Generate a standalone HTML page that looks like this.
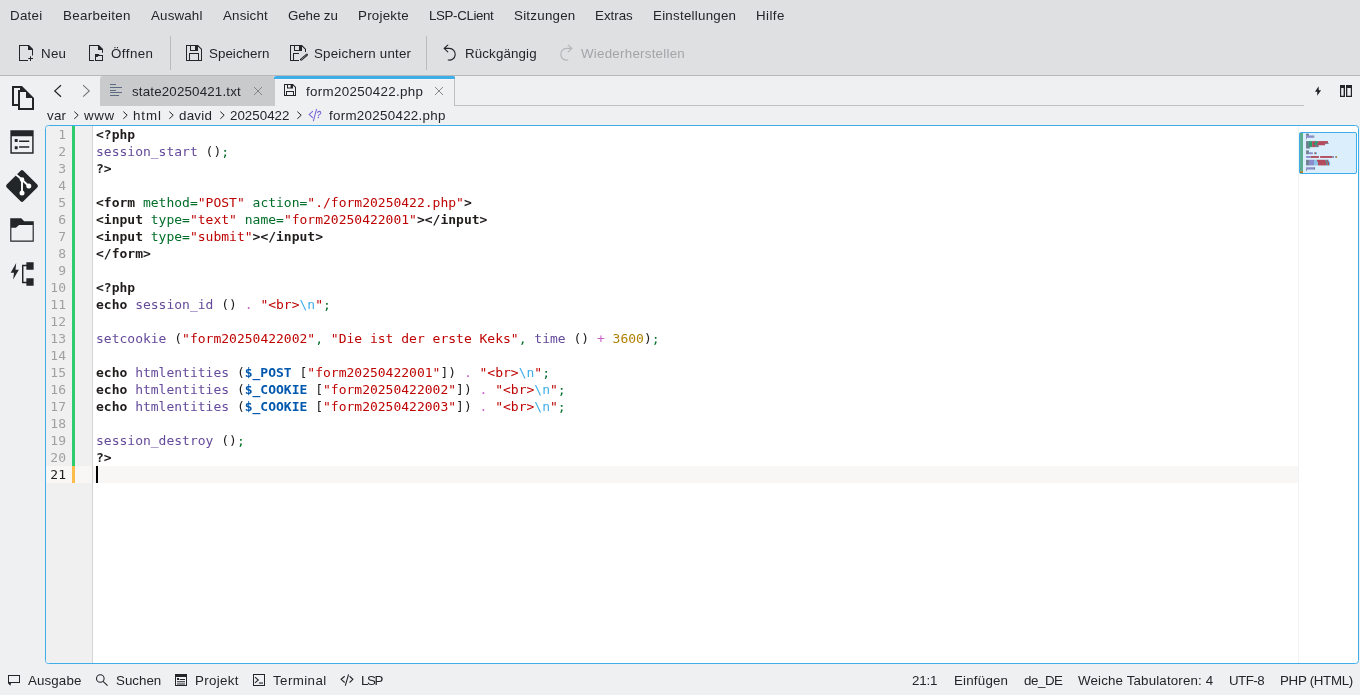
<!DOCTYPE html>
<html lang="de">
<head>
<meta charset="utf-8">
<title>form20250422.php — Kate</title>
<style>
html,body{margin:0;padding:0;}
.mi,.tb,.tt,.bc,.st,.cl,.ln{will-change:transform;}
body{width:1360px;height:695px;overflow:hidden;background:#eff0f1;position:relative;
  font-family:"Liberation Sans","DejaVu Sans",sans-serif;font-size:13.33px;color:#232629;letter-spacing:0.25px;}
.abs{position:absolute;}
#header{position:absolute;left:0;top:0;width:1360px;height:75px;background:#dee0e2;}
#hline{position:absolute;left:0;top:75px;width:1360px;height:1px;background:#b6b8ba;}
.mi{position:absolute;top:8px;height:16px;line-height:16px;white-space:nowrap;}
.tb{position:absolute;top:46px;height:16px;line-height:16px;white-space:nowrap;}
.tb.dis{color:#a3a5a7;}
.vsep{position:absolute;top:36px;width:1px;height:34px;background:#b9bbbd;}
svg{position:absolute;overflow:visible;}
#tab1{position:absolute;left:100px;top:76px;width:175px;height:30px;background:#c9cacb;border-radius:3px 3px 0 0;}
#tab2{position:absolute;left:275px;top:76px;width:180px;height:30px;background:#eff0f1;border-right:1px solid #bfc1c3;box-sizing:border-box;}
#tab2top{position:absolute;left:274px;top:76px;width:181px;height:3px;background:#3daee9;border-radius:2px 2px 0 0;}
#tab2hl{position:absolute;left:275px;top:79px;width:179px;height:1px;background:#f8f6f5;}
#tabline{position:absolute;left:455px;top:105px;width:849px;height:1px;background:#bfc1c3;}
.tt{position:absolute;top:84px;height:16px;line-height:16px;white-space:nowrap;}
.bc{position:absolute;top:108px;height:16px;line-height:16px;white-space:nowrap;}
#editor{position:absolute;left:45px;top:125px;width:1314px;height:539px;box-sizing:border-box;border:1px solid #3daee9;border-radius:3.5px;background:#fff;overflow:hidden;}
#gutter{position:absolute;left:0;top:0;width:46px;height:537px;background:#f0f0f0;}
#gsep{position:absolute;left:46px;top:0;width:1px;height:537px;background:#d4d4d4;}
#saved{position:absolute;left:26px;top:0;width:3px;height:340px;background:#2ecc71;}
#modif{position:absolute;left:26px;top:340px;width:3px;height:17px;background:#fdbc4b;}
#curline{position:absolute;left:0;top:340px;width:1252px;height:17px;background:#f8f7f6;}
#caret{position:absolute;left:50px;top:340px;width:2px;height:16.6px;background:#000;}
.ln{position:absolute;left:0;width:20px;text-align:right;height:17px;line-height:17px;color:#a0a0a0;
  font-family:"DejaVu Sans Mono","Liberation Mono",monospace;font-size:13px;letter-spacing:0;}
.ln.cur{color:#1e1e1e;}
.cl{position:absolute;left:50px;height:17px;line-height:17px;white-space:pre;color:#1f1c1b;
  font-family:"DejaVu Sans Mono","Liberation Mono",monospace;font-size:13px;letter-spacing:0;}
.cl b{font-weight:bold;}
.f{color:#644a9b;} .s{color:#bf0303;} .o{color:#ca60ca;} .g{color:#006e28;} .v{color:#0057ae;font-weight:bold;}
.e{color:#3daee9;} .n{color:#b08000;}
#mmsep{position:absolute;left:1252px;top:0;width:1px;height:537px;background:#f3f3f3;}
#mmbox{position:absolute;left:1253px;top:6px;width:58px;height:42px;box-sizing:border-box;border:1px solid #3daee9;border-radius:2px;background:#daeefb;}
.st{position:absolute;top:673px;height:16px;line-height:16px;white-space:nowrap;}
</style>
</head>
<body>
<div id="header"></div>
<div id="hline"></div>

<!-- menu bar -->
<div class="mi" style="left:10px">Datei</div>
<div class="mi" style="left:63px;letter-spacing:0.34px">Bearbeiten</div>
<div class="mi" style="left:151px;letter-spacing:0.17px">Auswahl</div>
<div class="mi" style="left:223px;letter-spacing:0.17px">Ansicht</div>
<div class="mi" style="left:288px;letter-spacing:-0.09px">Gehe zu</div>
<div class="mi" style="left:358px">Projekte</div>
<div class="mi" style="left:429px;letter-spacing:-0.37px">LSP-CLient</div>
<div class="mi" style="left:514px">Sitzungen</div>
<div class="mi" style="left:595px;letter-spacing:0px">Extras</div>
<div class="mi" style="left:653px">Einstellungen</div>
<div class="mi" style="left:756px;letter-spacing:0.43px">Hilfe</div>

<!-- toolbar -->
<div class="tb" style="left:41px">Neu</div>
<div class="tb" style="left:111px;letter-spacing:0.45px">Öffnen</div>
<div class="vsep" style="left:170px"></div>
<div class="tb" style="left:209px;letter-spacing:0.05px">Speichern</div>
<div class="tb" style="left:314px;letter-spacing:0.21px">Speichern unter</div>
<div class="vsep" style="left:426px"></div>
<div class="tb" style="left:465px;letter-spacing:0.13px">Rückgängig</div>
<div class="tb dis" style="left:581px">Wiederherstellen</div>

<!-- tabs -->
<div id="tab1"></div>
<div id="tab2"></div>
<div id="tab2top"></div>
<div id="tab2hl"></div>
<div id="tabline"></div>
<div class="tt" style="left:132px;letter-spacing:0.17px">state20250421.txt</div>
<div class="tt" style="left:306px;letter-spacing:0.33px">form20250422.php</div>

<!-- breadcrumb -->
<div class="bc" style="left:47px">var</div>
<div class="bc" style="left:84px;letter-spacing:0.62px">www</div>
<div class="bc" style="left:133px;letter-spacing:0.91px">html</div>
<div class="bc" style="left:179px">david</div>
<div class="bc" style="left:230px;letter-spacing:0.02px">20250422</div>
<div class="bc" style="left:329px;letter-spacing:0.3px">form20250422.php</div>

<!-- editor -->
<div id="editor">
  <div id="gutter"></div>
  <div id="curline"></div>
  <div id="gsep"></div>
  <div id="saved"></div>
  <div id="modif"></div>
  <div class="ln" style="top:0px">1</div>
  <div class="cl" style="top:0px"><b>&lt;?php</b></div>
  <div class="ln" style="top:17px">2</div>
  <div class="cl" style="top:17px"><span class="f">session_start</span> ()<span class="g">;</span></div>
  <div class="ln" style="top:34px">3</div>
  <div class="cl" style="top:34px"><b>?&gt;</b></div>
  <div class="ln" style="top:51px">4</div>
  <div class="ln" style="top:68px">5</div>
  <div class="cl" style="top:68px"><b>&lt;form</b> <span class="g">method=</span><span class="s">"POST"</span> <span class="g">action=</span><span class="s">"./form20250422.php"</span><b>&gt;</b></div>
  <div class="ln" style="top:85px">6</div>
  <div class="cl" style="top:85px"><b>&lt;input</b> <span class="g">type=</span><span class="s">"text"</span> <span class="g">name=</span><span class="s">"form20250422001"</span><b>&gt;&lt;/input&gt;</b></div>
  <div class="ln" style="top:102px">7</div>
  <div class="cl" style="top:102px"><b>&lt;input</b> <span class="g">type=</span><span class="s">"submit"</span><b>&gt;&lt;/input&gt;</b></div>
  <div class="ln" style="top:119px">8</div>
  <div class="cl" style="top:119px"><b>&lt;/form&gt;</b></div>
  <div class="ln" style="top:136px">9</div>
  <div class="ln" style="top:153px">10</div>
  <div class="cl" style="top:153px"><b>&lt;?php</b></div>
  <div class="ln" style="top:170px">11</div>
  <div class="cl" style="top:170px"><b>echo</b> <span class="f">session_id</span> () <span class="o">.</span> <span class="s">"&lt;br&gt;</span><span class="e">\n</span><span class="s">"</span><span class="g">;</span></div>
  <div class="ln" style="top:187px">12</div>
  <div class="ln" style="top:204px">13</div>
  <div class="cl" style="top:204px"><span class="f">setcookie</span> (<span class="s">"form20250422002"</span><span class="g">,</span> <span class="s">"Die ist der erste Keks"</span><span class="g">,</span> <span class="f">time</span> () <span class="o">+</span> <span class="n">3600</span>)<span class="g">;</span></div>
  <div class="ln" style="top:221px">14</div>
  <div class="ln" style="top:238px">15</div>
  <div class="cl" style="top:238px"><b>echo</b> <span class="f">htmlentities</span> (<span class="v">$_POST</span> [<span class="s">"form20250422001"</span>]) <span class="o">.</span> <span class="s">"&lt;br&gt;</span><span class="e">\n</span><span class="s">"</span><span class="g">;</span></div>
  <div class="ln" style="top:255px">16</div>
  <div class="cl" style="top:255px"><b>echo</b> <span class="f">htmlentities</span> (<span class="v">$_COOKIE</span> [<span class="s">"form20250422002"</span>]) <span class="o">.</span> <span class="s">"&lt;br&gt;</span><span class="e">\n</span><span class="s">"</span><span class="g">;</span></div>
  <div class="ln" style="top:272px">17</div>
  <div class="cl" style="top:272px"><b>echo</b> <span class="f">htmlentities</span> (<span class="v">$_COOKIE</span> [<span class="s">"form20250422003"</span>]) <span class="o">.</span> <span class="s">"&lt;br&gt;</span><span class="e">\n</span><span class="s">"</span><span class="g">;</span></div>
  <div class="ln" style="top:289px">18</div>
  <div class="ln" style="top:306px">19</div>
  <div class="cl" style="top:306px"><span class="f">session_destroy</span> ()<span class="g">;</span></div>
  <div class="ln" style="top:323px">20</div>
  <div class="cl" style="top:323px"><b>?&gt;</b></div>
  <div class="ln cur" style="top:340px">21</div>
  <div id="mmsep"></div>
  <div id="mmbox"></div>
  <svg id="mm" style="left:1253px;top:6px" width="58" height="42" viewBox="0 0 58 42"><rect x="1" y="1" width="3" height="38.2" fill="#5dab90"/><rect x="1" y="39.2" width="3" height="1.8" fill="#b07a1e"/><rect x="7.11" y="1.60" width="2.80" height="2.30" fill="#6e7d8c"/><rect x="7.11" y="3.47" width="7.25" height="2.30" fill="#8b8ccb"/><rect x="14.36" y="3.47" width="0.88" height="2.30" fill="#6e7d8c"/><rect x="7.11" y="5.34" width="0.73" height="1.87" fill="#6e7d8c"/><rect x="7.11" y="9.08" width="2.80" height="2.30" fill="#6e7d8c"/><rect x="9.91" y="9.08" width="3.26" height="2.30" fill="#2e9c6f"/><rect x="13.17" y="9.08" width="2.85" height="2.30" fill="#b34b5c"/><rect x="16.02" y="9.08" width="3.11" height="2.30" fill="#2e9c6f"/><rect x="19.13" y="9.08" width="9.84" height="2.30" fill="#b34b5c"/><rect x="7.11" y="10.95" width="2.80" height="2.30" fill="#6e7d8c"/><rect x="9.91" y="10.95" width="3.26" height="2.30" fill="#2e9c6f"/><rect x="13.17" y="10.95" width="1.81" height="2.30" fill="#b34b5c"/><rect x="14.98" y="10.95" width="3.11" height="2.30" fill="#2e9c6f"/><rect x="18.09" y="10.95" width="8.03" height="2.30" fill="#b34b5c"/><rect x="26.12" y="10.95" width="3.63" height="0.90" fill="#6e7d8c"/><rect x="7.11" y="12.82" width="2.80" height="2.30" fill="#6e7d8c"/><rect x="9.91" y="12.82" width="3.26" height="2.30" fill="#2e9c6f"/><rect x="13.17" y="12.82" width="2.85" height="2.30" fill="#b34b5c"/><rect x="16.02" y="12.82" width="3.73" height="2.30" fill="#6e7d8c"/><rect x="7.11" y="14.69" width="3.73" height="1.87" fill="#6e7d8c"/><rect x="7.11" y="18.43" width="2.80" height="2.30" fill="#6e7d8c"/><rect x="7.11" y="20.30" width="2.80" height="1.87" fill="#6e7d8c"/><rect x="9.91" y="20.30" width="3.94" height="1.87" fill="#8b8ccb"/><rect x="15.24" y="20.30" width="0.78" height="1.87" fill="#6e7d8c"/><rect x="16.02" y="20.30" width="1.04" height="1.87" fill="#b34b5c"/><rect x="17.05" y="20.30" width="0.93" height="1.87" fill="#5bc0ee"/><rect x="7.11" y="24.04" width="4.87" height="1.87" fill="#8b8ccb"/><rect x="11.98" y="24.04" width="7.92" height="1.87" fill="#b34b5c"/><rect x="21.09" y="24.04" width="12.01" height="1.87" fill="#b34b5c"/><rect x="33.11" y="24.04" width="1.81" height="1.87" fill="#8186b5"/><rect x="36.21" y="24.04" width="0.67" height="1.87" fill="#6e7d8c"/><rect x="36.89" y="24.04" width="1.14" height="1.87" fill="#a98a35"/><rect x="7.11" y="27.78" width="2.80" height="2.30" fill="#6e7d8c"/><rect x="9.91" y="27.78" width="5.08" height="2.30" fill="#8b8ccb"/><rect x="14.98" y="27.78" width="3.00" height="2.30" fill="#8cc3e8"/><rect x="17.99" y="27.78" width="8.13" height="2.30" fill="#b34b5c"/><rect x="26.12" y="27.78" width="1.81" height="2.30" fill="#6e7d8c"/><rect x="27.93" y="27.78" width="1.04" height="2.30" fill="#b34b5c"/><rect x="28.96" y="27.78" width="0.93" height="2.30" fill="#5bc0ee"/><rect x="7.11" y="29.65" width="2.80" height="2.30" fill="#6e7d8c"/><rect x="9.91" y="29.65" width="5.08" height="2.30" fill="#8b8ccb"/><rect x="14.98" y="29.65" width="4.04" height="2.30" fill="#8cc3e8"/><rect x="19.02" y="29.65" width="8.03" height="2.30" fill="#b34b5c"/><rect x="27.05" y="29.65" width="1.92" height="2.30" fill="#6e7d8c"/><rect x="28.96" y="29.65" width="1.04" height="2.30" fill="#b34b5c"/><rect x="30.00" y="29.65" width="1.04" height="2.30" fill="#5bc0ee"/><rect x="7.11" y="31.52" width="2.80" height="1.87" fill="#6e7d8c"/><rect x="9.91" y="31.52" width="5.08" height="1.87" fill="#8b8ccb"/><rect x="14.98" y="31.52" width="4.04" height="1.87" fill="#8cc3e8"/><rect x="19.02" y="31.52" width="8.03" height="1.87" fill="#b34b5c"/><rect x="27.05" y="31.52" width="1.92" height="1.87" fill="#6e7d8c"/><rect x="28.96" y="31.52" width="1.04" height="1.87" fill="#b34b5c"/><rect x="30.00" y="31.52" width="1.04" height="1.87" fill="#5bc0ee"/><rect x="7.11" y="35.26" width="7.87" height="2.30" fill="#8b8ccb"/><rect x="14.98" y="35.26" width="1.04" height="2.30" fill="#6e7d8c"/><rect x="7.11" y="37.13" width="0.73" height="1.87" fill="#6e7d8c"/></svg>
  <div id="caret"></div>
</div>

<!-- icons -->
<svg style="left:15px;top:42px" width="22" height="22" viewBox="0 0 22 22"><path fill="#232629" d="M4 3H14L18 7V13.6H17V8H13V4H5V18H13V19H4Z"/><path fill="#232629" d="M13.2 3.4L17.8 8H13.2Z"/><path fill="#232629" d="M15 14.2H16V16H18V17H16V19H15V17H13.2V16H15Z"/></svg>
<svg style="left:85px;top:42px" width="22" height="22" viewBox="0 0 22 22"><path fill="#232629" d="M4 3H14L18 7V10.8H17V8H13V4H5V18H9V19H4Z"/><path fill="#232629" d="M13.2 3.4L17.8 8H13.2Z"/><path fill="#232629" fill-rule="evenodd" d="M10 12.1H13.6L14.7 13.1H18V19H10Z M11 14.9H12.4L13.4 14H17V17.9H11Z"/></svg>
<svg style="left:183px;top:42px" width="22" height="22" viewBox="0 0 22 22"><path fill="#232629" fill-rule="evenodd" d="M3 3H15L19 7V19H3Z M4 4V18H6V11H16V18H18V7.4L15 4.4V9H7V4Z M8 4V8H12V4Z M7 12V18H15V12Z"/></svg>
<svg style="left:287px;top:42px" width="22" height="22" viewBox="0 0 22 22"><path fill="#232629" fill-rule="evenodd" d="M3 3H15L19 7V10H18V7.4L15 4.4V9H7V4H4V18H6V11H12V12H7V18H12V19H3Z M8 4V8H12V4Z"/><path d="M14.1 17.6L19.8 12.8" stroke="#232629" stroke-width="2.3" stroke-linecap="round"/><path d="M14.2 17.5L19.7 12.9" stroke="#dee0e2" stroke-width="0.8" stroke-dasharray="0.9 0.55"/></svg>
<svg style="left:439px;top:42px" width="22" height="22" viewBox="0 0 22 22"><path fill="none" stroke="#232629" stroke-width="1.15" stroke-linecap="round" stroke-linejoin="round" d="M8.8 3.1L5.1 6.4L8.8 9.8M5.3 6.4H10.4A5.85 5.85 0 1 1 9.204 17.976"/></svg>
<svg style="left:555px;top:42px" width="22" height="22" viewBox="0 0 22 22"><path fill="none" stroke="#b3b5b7" stroke-width="1.15" stroke-linecap="round" stroke-linejoin="round" d="M13.2 3.1L16.9 6.4L13.2 9.8M16.7 6.4H11.6A5.85 5.85 0 1 0 12.796 17.976"/></svg>
<svg style="left:6px;top:82px" width="32" height="32" viewBox="0 0 16 16"><path fill="#232629" fill-rule="evenodd" d="M3 2H8L10 4V5H7V12H3Z M4 3V11H6V4H7V3Z"/><path fill="#232629" fill-rule="evenodd" d="M6 4H10L14 8V14H6Z M7 5V13H13V8H10V5Z"/></svg>
<svg style="left:6px;top:126px" width="32" height="32" viewBox="0 0 22 22"><path fill="#232629" fill-rule="evenodd" d="M3 3H19V19H3Z M4 7V18H18V7Z"/><path fill="#232629" d="M6 9H8V11H6Z M9 10H16V11H9Z M6 14H8V16H6Z M9 14H16V15H9Z"/></svg>
<svg style="left:0px;top:163.85px" width="44" height="44" viewBox="0 0 44 44"><rect x="10.2" y="10.2" width="23.6" height="23.6" rx="2" fill="#232629" transform="rotate(45 22 22)"/><path d="M16.2 10.8L22 15.6V28.8M22.6 16.2L28.6 22" stroke="#fff" stroke-width="1.9" fill="none"/><circle cx="22" cy="15.6" r="2.3" fill="#fff"/><circle cx="22" cy="28.9" r="2.5" fill="#fff"/><circle cx="28.8" cy="22.1" r="2.5" fill="#fff"/></svg>
<svg style="left:6px;top:214px" width="32" height="32" viewBox="0 0 22 22"><path fill="#232629" fill-rule="evenodd" d="M2.9 2.9H10.5L12.5 4.9H19.1V19.1H2.9Z M3.7 9.4H6.8L9 7.5H18.3V18.2H3.7Z"/></svg>
<svg style="left:6px;top:258px" width="32" height="32" viewBox="0 0 22 22"><path fill="#232629" d="M14 3H19V8H14Z M14 14H19V19H14Z M11 4.7H14V5.7H12V16.3H14V17.3H11Z"/><path fill="#232629" d="M7 3.5L3.2 10.1H5.5L4.9 14.7L8.85 8H6.55Z"/></svg>
<svg style="left:50px;top:82px" width="16" height="18" viewBox="0 0 16 18"><path d="M11 3.2L4.8 8.9L11 14.7" fill="none" stroke="#232629" stroke-width="1.25"/></svg>
<svg style="left:78px;top:82px" width="16" height="18" viewBox="0 0 16 18"><path d="M5.1 3.2L11.3 8.9L5.1 14.7" fill="none" stroke="#737577" stroke-width="1.1"/></svg>
<svg style="left:108px;top:82px" width="16" height="16" viewBox="0 0 16 16"><path fill="#5c6b82" d="M2 2H8V3H2Z M2 5H14V6H2Z M2 8H8V9H2Z M2 10H14V11H2Z M2 13H11V14H2Z"/></svg>
<svg style="left:250px;top:83px" width="16" height="16" viewBox="0 0 16 16"><path d="M4 4L12 12M12 4L4 12" stroke="#797b7d" stroke-width="0.9" fill="none"/></svg>
<svg style="left:431px;top:83px" width="16" height="16" viewBox="0 0 16 16"><path d="M4 4L12 12M12 4L4 12" stroke="#797b7d" stroke-width="0.9" fill="none"/></svg>
<svg style="left:282px;top:82px" width="16" height="16" viewBox="0 0 16 16"><path fill="#232629" fill-rule="evenodd" d="M2 2H11L14 5V14H2Z M3 3V13H4V9H12V13H13V5.4L11 3.4V6.4H5V3Z M6 3V5.4H8.6V3Z M5 10V13H11V10Z"/></svg>
<svg style="left:74px;top:109px" width="6" height="12" viewBox="0 0 6 12"><path d="M0.3 2.6L4.2 6.2L0.3 9.8" fill="none" stroke="#232629" stroke-width="1"/></svg>
<svg style="left:123px;top:109px" width="6" height="12" viewBox="0 0 6 12"><path d="M0.3 2.6L4.2 6.2L0.3 9.8" fill="none" stroke="#232629" stroke-width="1"/></svg>
<svg style="left:169px;top:109px" width="6" height="12" viewBox="0 0 6 12"><path d="M0.3 2.6L4.2 6.2L0.3 9.8" fill="none" stroke="#232629" stroke-width="1"/></svg>
<svg style="left:220px;top:109px" width="6" height="12" viewBox="0 0 6 12"><path d="M0.3 2.6L4.2 6.2L0.3 9.8" fill="none" stroke="#232629" stroke-width="1"/></svg>
<svg style="left:297px;top:109px" width="6" height="12" viewBox="0 0 6 12"><path d="M0.3 2.6L4.2 6.2L0.3 9.8" fill="none" stroke="#232629" stroke-width="1"/></svg>
<svg style="left:304px;top:104px" width="24" height="24" viewBox="0 0 24 24"><g fill="none" stroke="#7468dc" stroke-width="1.05" stroke-linecap="round"><path d="M8.6 7.3L5.2 10.4L8.6 13.6"/><path d="M12.5 5.3L9.4 16.8"/><path d="M13.6 8.6C13.8 6.9 16.8 6.9 16.8 8.9C16.8 10.4 14.7 10.4 14.5 11.8"/></g><circle cx="14.4" cy="13.5" r="0.75" fill="#7468dc"/></svg>
<svg style="left:1310px;top:83px" width="16" height="16" viewBox="0 0 16 16"><path fill="#232629" d="M8.6 3.2L5 8.8H7.2V12.8L11.1 7.2H8.8Z"/></svg>
<svg style="left:1338px;top:83px" width="16" height="16" viewBox="0 0 16 16"><path fill="#232629" fill-rule="evenodd" d="M2 2H7V14H2Z M3.2 5V12.8H5.6V5Z M8 2H14V14H8Z M9.3 5V12.8H12.8V5Z"/></svg>
<svg style="left:6px;top:672px" width="16" height="16" viewBox="0 0 16 16"><path fill="#232629" fill-rule="evenodd" d="M2 3H14V11H5L4.4 13.8L2.2 11.6L2 11Z M3 4V10H13V4Z"/></svg>
<svg style="left:94px;top:672px" width="16" height="16" viewBox="0 0 16 16"><circle cx="6.3" cy="6.5" r="3.8" fill="none" stroke="#232629" stroke-width="1.1"/><path d="M9 9.3L13.6 13.6" stroke="#232629" stroke-width="1.1"/></svg>
<svg style="left:173px;top:672px" width="16" height="16" viewBox="0 0 16 16"><path fill="#232629" fill-rule="evenodd" d="M2 2H14V14H2Z M3 5V13H13V5Z"/><path fill="#232629" d="M4 6H6V8H4Z M6.6 7H12V8H6.6Z M4 9.2H12V10.2H4Z M4 11.4H12V12.4H4Z"/></svg>
<svg style="left:251px;top:672px" width="16" height="16" viewBox="0 0 16 16"><path fill="#232629" fill-rule="evenodd" d="M2 2H14V14H2Z M3 3V13H13V3Z"/><path d="M4 5.2L7.3 8L4 10.8" fill="none" stroke="#232629" stroke-width="1.1"/><path fill="#232629" d="M7.9 10.5H12V11.6H7.9Z"/></svg>
<svg style="left:339px;top:672px" width="16" height="16" viewBox="0 0 16 16"><path d="M5.7 4.25L2.1 7.3L5.7 10.5M10.6 4.25L13.9 7.3L10.6 10.5M9.6 2.3L6.3 13.6" fill="none" stroke="#232629" stroke-width="1.1"/></svg>

<!-- status bar -->
<div class="st" style="left:28px;letter-spacing:0.12px">Ausgabe</div>
<div class="st" style="left:116px;letter-spacing:0px">Suchen</div>
<div class="st" style="left:195px;letter-spacing:0.33px">Projekt</div>
<div class="st" style="left:273px;letter-spacing:0.4px">Terminal</div>
<div class="st" style="left:361px;letter-spacing:-1.4px">LSP</div>
<div class="st" style="left:912px;letter-spacing:-0.2px">21:1</div>
<div class="st" style="left:954px;letter-spacing:0.2px">Einfügen</div>
<div class="st" style="left:1024px;letter-spacing:-0.45px">de_DE</div>
<div class="st" style="left:1078px;letter-spacing:0.15px">Weiche Tabulatoren: 4</div>
<div class="st" style="left:1229px;letter-spacing:-0.53px">UTF-8</div>
<div class="st" style="left:1280px;letter-spacing:-0.31px">PHP (HTML)</div>
</body>
</html>
